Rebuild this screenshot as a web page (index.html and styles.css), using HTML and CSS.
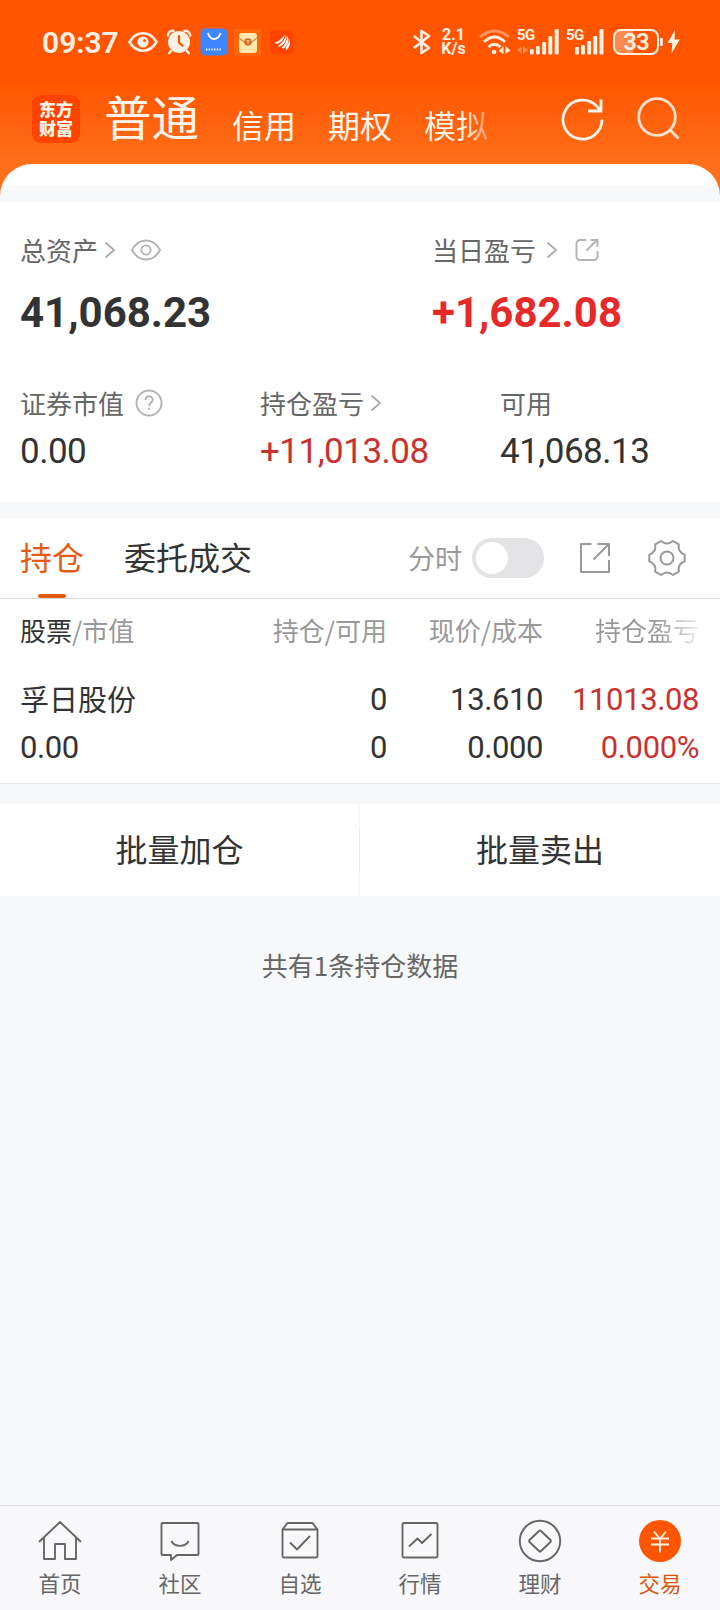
FILE: index.html
```html
<!DOCTYPE html>
<html lang="zh-CN">
<head>
  <meta charset="UTF-8" />
  <title>交易</title>
  <link rel="stylesheet" href="styles.css">
</head>
<body>

  <header class="header">
    <div class="status-bar">
      <span class="clock">09:37</span>
      <svg class="st-eye" width="30" height="22" viewBox="0 0 30 22" fill="none" stroke="#fff0e4" stroke-width="2.6">
        <path d="M1.5 11C5 5 9.500 2.300 15 2.300S25 5 28.500 11C25 17 20.500 19.700 15 19.700S5 17 1.500 11z"/>
        <circle cx="15" cy="11" r="5.600" fill="#fff0e4" stroke="none"/>
        <circle cx="16.500" cy="9.500" r="1.500" fill="#ff5a08" stroke="none"/>
      </svg>
      <svg class="st-alarm" width="26" height="26" viewBox="0 0 26 26">
        <g fill="none" stroke="#fff0e4" stroke-width="2.400" stroke-linecap="round">
          <path d="M1.800 6.500A5 5 0 0 1 7.500 1.800M24.200 6.500A5 5 0 0 0 18.500 1.800M5 22l-1.800 2.300M21 22l1.800 2.300"/>
        </g>
        <circle cx="13" cy="13" r="11" fill="#fff0e4"/>
        <path d="M13 7v6.500l3.500 3.200" fill="none" stroke="#ff5500" stroke-width="2.200" stroke-linecap="round"/>
      </svg>
      <svg class="st-shop" width="28" height="28" viewBox="0 0 28 28">
        <rect x=".5" y=".5" width="27" height="27" rx="5" fill="#3f86fa"/>
        <path d="M8 5C9 8.500 11 11 14 11s5.500-2.500 6.500-6" fill="none" stroke="#fff" stroke-width="1.800"/>
        <path d="M6 21.500h16" fill="none" stroke="#fff" stroke-width="2.200" stroke-dasharray="1.300 1.400"/>
      </svg>
      <svg class="st-mail" width="27" height="27" viewBox="0 0 27 27">
        <rect width="27" height="27" fill="#fc6508"/>
        <rect x="5" y="4" width="18" height="20" rx="3" fill="#ffe9ae"/>
        <path d="M5 9l6 4.500h6L23 9" fill="none" stroke="#c98a45" stroke-width="1.200"/>
        <circle cx="14" cy="13" r="3.700" fill="#d9641c"/>
        <path d="M12 11.800h4M14 11.800v3.500" stroke="#ffd08a" stroke-width="1"/>
      </svg>
      <svg class="st-news" width="24" height="24" viewBox="0 0 24 24">
        <rect width="24" height="24" rx="4.500" fill="#ff4400"/>
        <path d="M5 12.500Q10.500 11 15 4.500Q13.500 12.500 6.500 14zM8 15.800Q14.500 12 16 5Q18 12 9.500 17zM11.500 17.800Q17.500 12.500 17 5.500Q21 12 14 18.500zM16.500 20Q14.500 18 17.500 14.500Q19.500 12 19 9Q21 13 19 16.500Q18 18.500 16.500 20z" fill="#fff"/>
      </svg>
      <svg class="st-bt" width="18" height="26" viewBox="0 0 18 26" fill="none" stroke="#fff0e4" stroke-width="2.700" stroke-linejoin="round">
        <path d="M1 7l15 12-7.500 5V2L16 7 1 19"/>
      </svg>
      <div class="speed"><span>2.1</span><span>K/s</span></div>
      <svg class="st-wifi" width="32" height="26" viewBox="0 0 32 26" fill="none" stroke="#fff0e4" stroke-width="2.700">
        <path d="M1 8Q15.500-4 30 8" opacity=".4"/>
        <path d="M5 13Q15.500 3 26 13M9.500 18Q15.500 12.500 21.500 18"/>
        <circle cx="15" cy="23" r="2.300" fill="#fff0e4" stroke="none"/>
        <path d="M24.500 17v8L20 22zM26.500 17v8l5-3.500z" fill="#fff0e4" stroke="none"/>
      </svg>
      <div class="signal">
        <span class="net">5G</span>
        <svg width="42" height="26" viewBox="0 0 42 26" fill="#fff0e4">
          <path d="M4.500 17v8L0 21zM6 17v8l5-4z" opacity=".35"/>
          <rect x="13" y="20" width="3.700" height="5.500" rx="1"/>
          <rect x="19" y="17" width="3.700" height="8.500" rx="1"/>
          <rect x="25.200" y="13" width="3.900" height="12.500" rx="1"/>
          <rect x="31.400" y="7" width="3.900" height="18.500" rx="1"/>
          <rect x="37.700" y="0" width="4" height="25.500" rx="1"/>
        </svg>
      </div>
      <div class="signal signal-2">
        <span class="net">5G</span>
        <svg width="38" height="26" viewBox="0 0 38 26" fill="#fff0e4">
          <rect x="9" y="18" width="3.900" height="7.500" rx="1"/>
          <rect x="15" y="16" width="3.900" height="9.500" rx="1"/>
          <rect x="21.200" y="12" width="3.900" height="13.500" rx="1"/>
          <rect x="27.300" y="7" width="3.900" height="18.500" rx="1"/>
          <rect x="33.500" y="0" width="4" height="25.500" rx="1"/>
        </svg>
      </div>
      <div class="battery">33</div>
      <svg class="st-bolt" width="20" height="24" viewBox="0 0 20 24" fill="#fff0e4">
        <rect x="0" y="8" width="2.800" height="8" rx="1"/>
        <path d="M15 0L7.500 13h4.800L11.500 23.500 19.800 9.500h-5.300z"/>
      </svg>
    </div>

    <div class="top-nav">
      <div class="logo"><span>东方</span><span>财富</span></div>
      <span class="account-tab active">普通</span>
      <span class="account-tab">信用</span>
      <span class="account-tab">期权</span>
      <span class="account-tab fade-white">模拟</span>
      <svg class="icon-refresh" width="44" height="44" viewBox="0 0 44 44" fill="none" stroke="#fff5ea" stroke-width="2.800">
        <path d="M41 22.500A19.500 19.500 0 1 1 35.500 9L39 12.500"/>
        <path d="M40 2.500v11.500H27"/>
      </svg>
      <svg class="icon-search" width="44" height="44" viewBox="0 0 44 44" fill="none" stroke="#ffe3cf" stroke-width="2.800">
        <circle cx="20" cy="20" r="18.300"/>
        <path d="M32.500 32.500L41.500 41.500"/>
      </svg>
    </div>
  </header>

  <main class="page">
    <div class="page-top"></div>

    <section class="summary">
      <div class="summary-main">
        <div class="cell">
          <div class="label">总资产
            <svg class="chevron near" width="12" height="18" viewBox="0 0 12 18"><path d="M1.500 1.500L10 9l-8.500 7.500"/></svg>
            <svg class="line-icon" width="30" height="22" viewBox="0 0 30 22"><path d="M1 11C4.500 4.500 9 1.500 15 1.500S25.500 4.500 29 11C25.500 17.500 21 20.500 15 20.500S4.500 17.500 1 11z"/><circle cx="15" cy="11" r="4.600"/></svg>
          </div>
          <div class="value big">41,068.23</div>
        </div>
        <div class="cell">
          <div class="label">当日盈亏
            <svg class="chevron far" width="12" height="18" viewBox="0 0 12 18"><path d="M1.500 1.500L10 9l-8.500 7.500"/></svg>
            <svg class="line-icon share" width="24" height="24" viewBox="0 0 24 24"><path d="M11 2H5a3.500 3.500 0 0 0-3.500 3.500v13A3.500 3.500 0 0 0 5 22h14a3.500 3.500 0 0 0 3.500-3.500V13M11.500 12.500L22 2M15.500 2H22.500v7"/></svg>
          </div>
          <div class="value big rise">+1,682.08</div>
        </div>
      </div>
      <div class="summary-sub">
        <div class="cell">
          <div class="label">证券市值
            <svg class="line-icon help" width="28" height="28" viewBox="0 0 28 28"><circle cx="14" cy="14" r="12.500"/><path d="M10.500 11c0-5 7.200-5 7.200-.2 0 2.800-3.500 3-3.500 6.200M14.200 18.800v2.200"/></svg>
          </div>
          <div class="value">0.00</div>
        </div>
        <div class="cell">
          <div class="label">持仓盈亏
            <svg class="chevron near" width="12" height="18" viewBox="0 0 12 18"><path d="M1.500 1.500L10 9l-8.500 7.500"/></svg>
          </div>
          <div class="value rise-dark">+11,013.08</div>
        </div>
        <div class="cell">
          <div class="label">可用</div>
          <div class="value">41,068.13</div>
        </div>
      </div>
    </section>

    <section class="holdings">
      <div class="tabs">
        <span class="tab active">持仓</span>
        <span class="tab">委托成交</span>
        <span class="switch-label">分时</span>
        <span class="switch"></span>
        <svg class="icon-export" width="32" height="32" viewBox="0 0 32 32"><path d="M12.500 2H2v28h28V18M14.500 17.500L29.500 2.500M18.500 2H30v12"/></svg>
        <svg class="icon-gear" width="38" height="38" viewBox="0 0 38 38"><path d="M36.700 22.400Q29.400 25 30.800 32.600L24.900 36Q19 31 13.100 36L7.200 32.600Q8.600 25 1.300 22.400V15.600Q8.600 13 7.200 5.400L13.100 2Q19 7 24.900 2L30.800 5.400Q29.400 13 36.700 15.600z"/><circle cx="19" cy="19" r="6.500"/></svg>
      </div>

      <div class="table">
        <div class="row head">
          <span><b>股票</b>/市值</span>
          <span>持仓/可用</span>
          <span>现价/成本</span>
          <span class="fade-gray">持仓盈亏</span>
        </div>
        <div class="row">
          <span class="name">孚日股份</span>
          <span>0</span>
          <span>13.610</span>
          <span class="rise-dark">11013.08</span>
        </div>
        <div class="row">
          <span>0.00</span>
          <span>0</span>
          <span>0.000</span>
          <span class="rise-dark">0.000%</span>
        </div>
      </div>
    </section>

    <div class="batch">
      <span>批量加仓</span>
      <span>批量卖出</span>
    </div>

    <p class="total">共有1条持仓数据</p>
  </main>

  <nav class="bottom-nav">
    <div class="nav-item">
      <svg width="44" height="44" viewBox="0 0 44 44"><path d="M1 23L22 3l21 20M6 19v21h11V25h10v15h11V19"/></svg>
      <span>首页</span>
    </div>
    <div class="nav-item">
      <svg width="44" height="44" viewBox="0 0 44 44"><path d="M4.500 4h35a1 1 0 0 1 1 1v30a1 1 0 0 1-1 1H19l-6 5v-5H4.500a1 1 0 0 1-1-1V5a1 1 0 0 1 1-1zM13.500 22c3 6.500 14 6.500 17 0"/></svg>
      <span>社区</span>
    </div>
    <div class="nav-item">
      <svg width="44" height="44" viewBox="0 0 44 44"><path d="M4.500 10.500h35V37a1.500 1.500 0 0 1-1.500 1.500H6A1.500 1.500 0 0 1 4.500 37zM4.500 10.500L9.500 4h25l5 6.500M12 23.500l7 7 13-13.500"/></svg>
      <span>自选</span>
    </div>
    <div class="nav-item">
      <svg width="44" height="44" viewBox="0 0 44 44"><rect x="4.500" y="4" width="35" height="34.500" rx="1.500"/><path d="M11 27.500l8.500-8 4.500 4.500 9.500-9"/></svg>
      <span>行情</span>
    </div>
    <div class="nav-item">
      <svg width="44" height="44" viewBox="0 0 44 44"><circle cx="22" cy="22" r="20.200"/><path d="M21 12q1-1 2 0l9.500 9q1 1 0 2L23 32q-1 1-2 0l-9.500-9q-1-1 0-2z"/></svg>
      <span>理财</span>
    </div>
    <div class="nav-item active">
      <svg width="44" height="44" viewBox="0 0 44 44"><circle class="disc" cx="22" cy="22" r="21"/><path d="M16 12.500l6 7.500 6-7.500M13 19.500h18M13 25.500h18M22 19.500v14"/></svg>
      <span>交易</span>
    </div>
  </nav>

</body>
</html>
```
FILE: styles.css
```css
* {
  box-sizing: border-box;
}

body {
  margin: 0;
  height: 1610px;
  display: flex;
  flex-direction: column;
  overflow: hidden;
  background: #f7f8fa;
  color: #333;
  font-family: "Noto Sans CJK SC", sans-serif;
  font-size: 26px;
}

svg {
  flex: none;
  display: block;
}

/* header */
.header {
  height: 204px;
  flex: none;
  background: linear-gradient(#ff5500 0, #ff5500 80px, #ff6f1a 164px, #ff6f1a 100%);
  color: #fff5ea;
}

.status-bar {
  display: flex;
  align-items: center;
  height: 84px;
  padding-left: 42px;
  color: #fff0e4;
  font-family: Roboto, sans-serif;
}

.clock {
  width: 86px;
  font-size: 30px;
  font-weight: 600;
}

.st-alarm {
  margin-left: 8px;
}

.st-shop {
  margin-left: 8px;
}

.st-mail {
  margin-left: 6px;
}

.st-news {
  margin-left: 9px;
}

.st-bt {
  margin-left: 119px;
}

.speed {
  width: 27px;
  margin-left: 9px;
  display: flex;
  flex-direction: column;
  align-items: center;
  font-size: 16px;
  font-weight: 700;
  line-height: 14px;
}

.st-wifi {
  margin-left: 12px;
}

.signal {
  position: relative;
  margin-left: 6px;
}

.signal-2 {
  margin-left: 7px;
}

.net {
  position: absolute;
  left: 0;
  top: -1px;
  font-size: 15px;
  font-weight: 700;
  line-height: 14px;
  letter-spacing: -0.5px;
}

.battery {
  width: 46px;
  height: 26px;
  margin-left: 9px;
  border: 2px solid #fff0e4;
  border-radius: 8px;
  background: linear-gradient(90deg, #ff8a50 42%, transparent 42%);
  font-size: 24px;
  font-weight: 600;
  line-height: 23px;
  text-align: center;
  letter-spacing: -1px;
}

.st-bolt {
  margin-left: 1px;
}

.top-nav {
  display: flex;
  height: 80px;
  padding-left: 32px;
}

.logo {
  display: flex;
  flex-direction: column;
  justify-content: center;
  align-items: center;
  width: 48px;
  height: 48px;
  margin-top: 11px;
  border-radius: 9px;
  background: #ff4400;
  font-size: 17px;
  font-weight: 900;
  line-height: 20px;
}

.logo span {
  margin-top: -1px;
}

.account-tab {
  margin: 26px 32px 0 0;
  font-size: 32px;
  line-height: 28px;
}

.account-tab.active {
  margin: 9px 33px 0 24px;
  font-size: 47.5px;
  line-height: 46px;
}

.account-tab.fade-white {
  margin-right: 0;
  background: linear-gradient(90deg, #fff5ea 60%, rgba(255, 245, 234, 0.35));
  -webkit-background-clip: text;
  background-clip: text;
  color: transparent;
  height: 40px;
}

.icon-refresh {
  margin: 13px 0 0 73px;
}

.icon-search {
  margin: 13px 0 0 32px;
}

/* page */
.page {
  flex: 1;
  margin-top: -40px;
}

.page-top {
  height: 38px;
  border-radius: 32px 32px 0 0;
  background: linear-gradient(#fff 22px, #f7f8fa 22px);
}

.summary {
  height: 300px;
  padding: 28px 0 0 20px;
  background: #fff;
}

.summary-main {
  display: grid;
  grid-template-columns: 412px 1fr;
  height: 153px;
}

.summary-sub {
  display: grid;
  grid-template-columns: 240px 240px 1fr;
}

.label {
  display: flex;
  align-items: center;
  height: 40px;
  color: #666;
  line-height: 36px;
}

.chevron {
  fill: none;
  stroke: #aaa;
  stroke-width: 1.8;
}

.chevron.near {
  margin: 0 15px 0 6px;
}

.chevron.far {
  margin: 0 17px 0 10px;
}

.line-icon {
  fill: none;
  stroke: #b3b3b3;
  stroke-width: 1.9;
}

.help {
  margin-left: 11px;
}

.value {
  height: 40px;
  margin-top: 9px;
  font-family: Roboto, sans-serif;
  font-size: 35px;
  line-height: 40px;
  letter-spacing: -0.5px;
}

.value.big {
  margin-top: 23px;
  font-size: 42px;
  font-weight: 700;
  letter-spacing: 0;
}

.rise {
  color: #e62a2a;
}

.rise-dark {
  color: #c93230;
}

/* holdings */
.holdings {
  height: 266px;
  margin-top: 16px;
  border-bottom: 1px solid #e8e8ea;
  background: #fff;
}

.tabs {
  display: flex;
  align-items: center;
  height: 81px;
  padding-left: 20px;
  border-bottom: 1px solid #ddd;
  font-size: 32px;
}

.tab {
  position: relative;
  height: 80px;
  margin-right: 40px;
  line-height: 76px;
}

.tab.active {
  color: #e65a14;
}

.tab.active::after {
  content: "";
  position: absolute;
  left: 18px;
  bottom: 0;
  width: 28px;
  height: 4px;
  border-radius: 2px;
  background: #e65a14;
}

.switch-label {
  width: 54px;
  margin-left: 116px;
  color: #999;
  font-size: 27px;
  line-height: 36px;
}

.switch {
  width: 72px;
  height: 40px;
  margin-left: 10px;
  padding: 4px;
  border-radius: 20px;
  background: #e4e4e6;
}

.switch::before {
  content: "";
  display: block;
  width: 32px;
  height: 32px;
  border-radius: 50%;
  background: #fff;
}

.icon-export,
.icon-gear {
  fill: none;
  stroke: #999;
  stroke-width: 2;
  stroke-linejoin: round;
}

.icon-export {
  margin-left: 35px;
}

.icon-gear {
  margin-left: 37px;
}

.table {
  padding: 9px 21px 0 20px;
}

.row {
  display: grid;
  grid-template-columns: 211px 156px 156px 156px;
  height: 48px;
  font-family: Roboto, sans-serif;
  font-size: 31px;
  line-height: 50px;
  letter-spacing: -0.4px;
  text-align: right;
}

.row span:first-child {
  text-align: left;
}

.row.head {
  height: 67px;
  color: #999;
  font-family: "Noto Sans CJK SC", sans-serif;
  font-size: 26px;
  line-height: 44px;
  letter-spacing: 0;
}

.head b {
  color: #333;
  font-weight: 400;
}

.row .name {
  font-family: "Noto Sans CJK SC", sans-serif;
  font-size: 29px;
  line-height: 46px;
  letter-spacing: 0;
}

.head .fade-gray {
  justify-self: end;
  background: linear-gradient(90deg, #999 60%, #eee);
  -webkit-background-clip: text;
  background-clip: text;
  color: transparent;
}

.batch {
  display: grid;
  grid-template-columns: 359px 360px;
  gap: 1px;
  height: 92px;
  margin-top: 20px;
  background: linear-gradient(#f5f5f7 26px, #e8e8ea 26px, #e8e8ea 66px, #f5f5f7 66px);
  font-size: 32px;
  line-height: 88px;
  text-align: center;
}

.batch span {
  background: #fff;
}

.total {
  margin: 49px 0 0;
  color: #666;
  line-height: 40px;
  text-align: center;
}

/* bottom nav */
.bottom-nav {
  display: grid;
  grid-template-columns: repeat(6, 1fr);
  flex: none;
  height: 105px;
  border-top: 1px solid #dfe1e3;
  background: #f8f8fa;
}

.nav-item {
  display: flex;
  flex-direction: column;
  align-items: center;
  padding-top: 13px;
  color: #666;
  font-size: 21.5px;
}

.nav-item svg {
  fill: none;
  stroke: #666;
  stroke-width: 1.9;
  stroke-linejoin: round;
}

.nav-item span {
  margin-top: 4px;
  line-height: 32px;
}

.nav-item.active {
  color: #d9560f;
}

.nav-item.active svg {
  stroke: #fff0e4;
}

.nav-item .disc {
  fill: #ff5500;
  stroke: none;
}
```
